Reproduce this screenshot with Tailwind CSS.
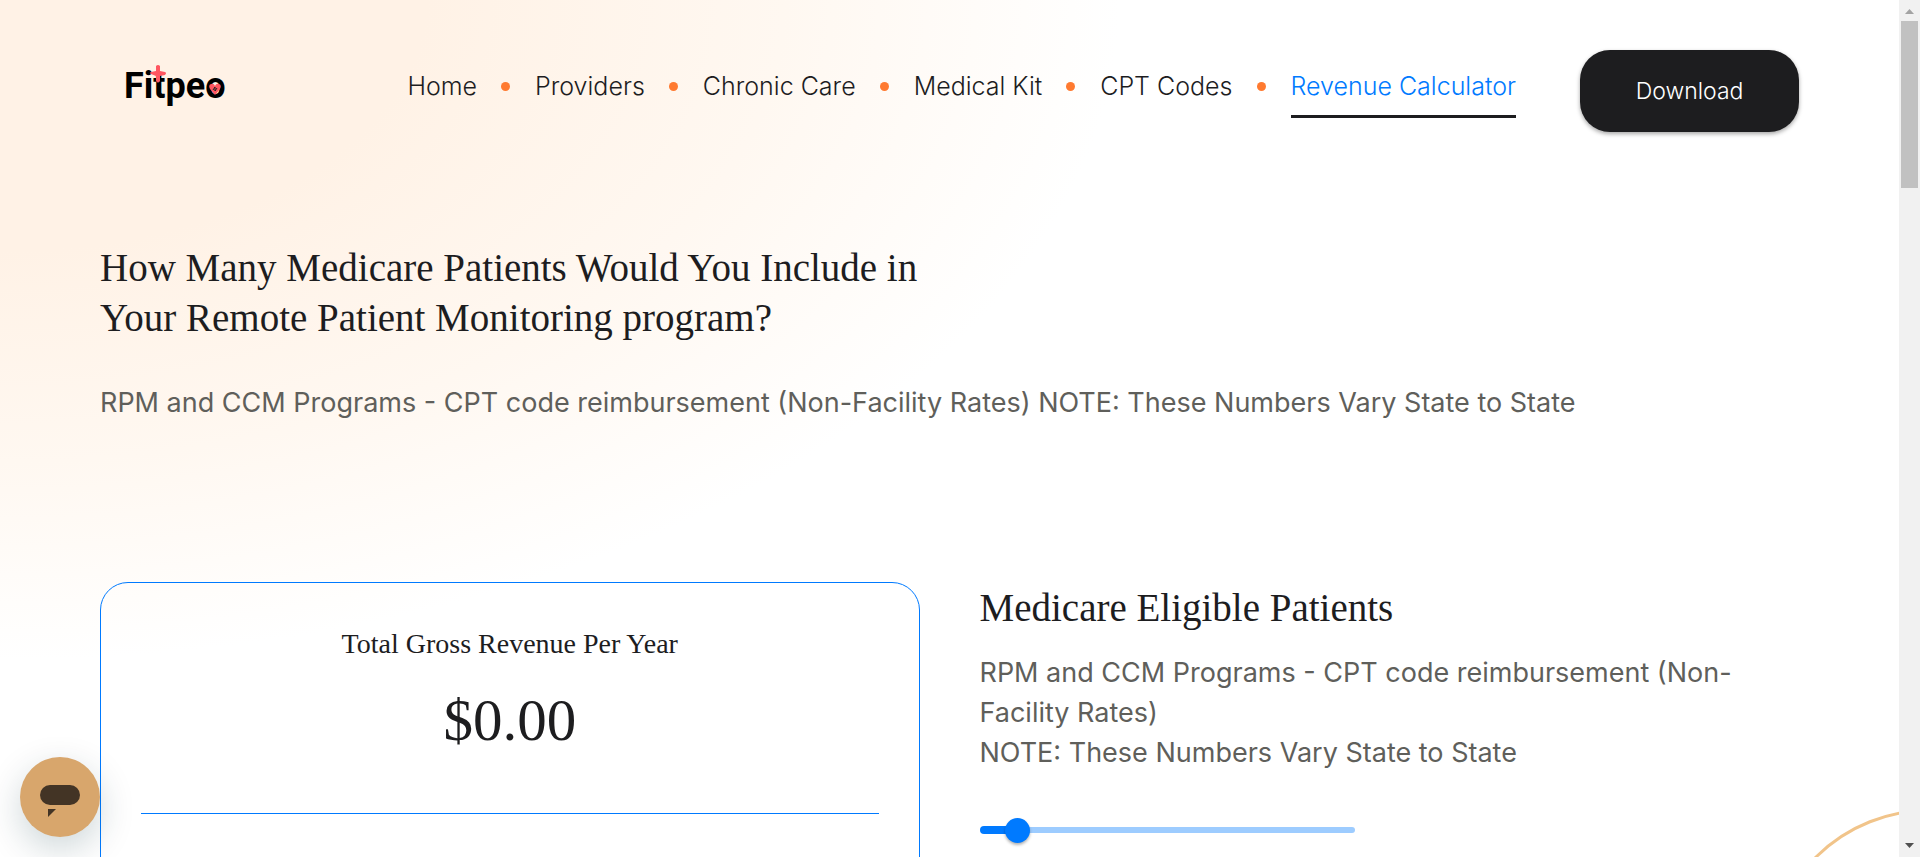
<!DOCTYPE html>
<html lang="en">
<head>
<meta charset="utf-8">
<meta name="viewport" content="width=device-width, initial-scale=1">
<title>Revenue Calculator</title>
<script src="https://cdn.jsdelivr.net/npm/@tailwindcss/browser@4"></script>
</head>
<body class="flex h-screen overflow-hidden bg-white font-['Inter',sans-serif] text-[#1d1d1f]">
<div class="relative min-w-0 flex-1 overflow-hidden bg-[radial-gradient(1120px_660px_at_0_0,#fff2e6_0%,#fff2e6_38%,#fff8f1_70%,#ffffff_100%)] px-[100px]">
  <header class="flex items-start justify-between pt-[50px]">
    <a href="#" class="relative mt-3 ml-6 block h-12 font-['Roboto',sans-serif] text-[36px] leading-12 font-bold text-black" aria-label="Fitpeo">Fitpeo
      <svg class="absolute top-[3px] left-[26px] h-[18px] w-[16px]" viewBox="0 0 16 18" fill="#ff5660" aria-hidden="true"><path d="M6 1q2-2 4 0l0 5 5 1q2 1 0 3l-5 1-0 5q-2 3-4 0l0-5-5-2q-2-1 0-2l5-1z"/></svg>
      <svg class="absolute top-[21px] left-[85px] h-3 w-3" viewBox="0 0 12 12" aria-hidden="true"><path fill="#ff5660" d="M6 12L1 6Q-1 2 2 1t4 2q1-3 4-2t1 5z"/><path fill="none" stroke="#222" d="M4 7l2-3v4l2-3"/></svg>
    </a>
    <nav class="mr-16 ml-auto text-[25px] leading-9 font-light" aria-label="Main">
      <ul class="flex items-start gap-[25px] pt-[18px]">
        <li class="flex items-center gap-6"><a href="#">Home</a><span class="size-[9px] rounded-full bg-[#ff7a30]"></span></li>
        <li class="flex items-center gap-6"><a href="#">Providers</a><span class="size-[9px] rounded-full bg-[#ff7a30]"></span></li>
        <li class="flex items-center gap-6"><a href="#">Chronic Care</a><span class="size-[9px] rounded-full bg-[#ff7a30]"></span></li>
        <li class="flex items-center gap-6"><a href="#">Medical Kit</a><span class="size-[9px] rounded-full bg-[#ff7a30]"></span></li>
        <li class="flex items-center gap-6"><a href="#">CPT Codes</a><span class="size-[9px] rounded-full bg-[#ff7a30]"></span></li>
        <li><a href="#" aria-current="page" class="block border-b-3 border-[#1d1d1f] pb-[11px] text-[#007aff]">Revenue Calculator</a></li>
      </ul>
    </nav>
    <button class="h-[82px] w-[219px] rounded-[30px] bg-[#1d1d1f] text-[23px] font-light text-white shadow-[0_2px_4px_rgba(0,0,0,0.35)]">Download</button>
  </header>

  <section class="mt-[111px]">
    <h1 class="font-['Liberation_Serif',serif] text-[39px] leading-[50px]">How Many Medicare Patients Would You Include in<br>Your Remote Patient Monitoring program?</h1>
    <p class="mt-10 text-[27px] leading-10 text-[#5f5f5b]">RPM and CCM Programs - CPT code reimbursement (Non-Facility Rates) NOTE: These Numbers Vary State to State</p>
  </section>

  <section class="mt-[159px] grid grid-cols-2 gap-[60px]">
    <div class="h-[600px] rounded-[28px] border border-[#007aff] px-10 pt-[41px] text-center font-['Liberation_Serif',serif]">
      <h2 class="text-[28px] leading-10">Total Gross Revenue Per Year</h2>
      <p class="mt-4 text-[59px] leading-[80px]">$0.00</p>
      <hr class="mt-[53px] border-[#007aff]">
    </div>
    <div class="pt-px pr-10">
      <h2 class="font-['Liberation_Serif',serif] text-[39px] leading-[50px]">Medicare Eligible Patients</h2>
      <p class="mt-5 text-[27px] leading-10 text-[#5f5f5b]">RPM and CCM Programs - CPT code reimbursement (Non-Facility Rates)<br>NOTE: These Numbers Vary State to State</p>
      <div class="mt-[45px] grid w-[375px] items-center">
        <div class="col-start-1 row-start-1 flex h-2 items-center"><div class="h-2 w-1/10 rounded-full bg-[#007aff]"></div><div class="h-[6px] flex-1 rounded-r-full bg-[#9dccff]"></div></div>
        <input type="range" min="0" max="2000" value="200" aria-label="Medicare eligible patients" class="relative col-start-1 row-start-1 -mx-3 h-6 appearance-none bg-transparent [&::-webkit-slider-thumb]:size-[25px] [&::-webkit-slider-thumb]:appearance-none [&::-webkit-slider-thumb]:rounded-full [&::-webkit-slider-thumb]:bg-[#007aff] [&::-webkit-slider-thumb]:shadow-[0_2px_3px_rgba(0,0,0,0.3)]">
      </div>
    </div>
  </section>

  <!-- Decorative ring, cut off by the right edge of the page -->
  <div class="absolute top-[809px] -right-48 size-[324px] rounded-full border-3 border-[#f1c48a]"></div>

  <button class="absolute bottom-5 left-5 flex size-20 items-center justify-center rounded-full bg-[#d8a66c] pt-2 shadow-[0_12px_36px_rgba(6,50,60,0.2)]" aria-label="Open chat">
    <svg class="h-8 w-10" viewBox="0 0 40 32" fill="#433425" aria-hidden="true"><rect width="40" height="20" rx="10"/><path d="M8 24h8l-8 8z"/></svg>
  </button>
</div>
<div class="flex w-[21px] flex-col items-center justify-between bg-[#f1f1f1]" aria-hidden="true">
  <div class="flex w-full flex-col items-center">
    <svg class="h-[21px] w-[9px]" viewBox="0 0 9 21" fill="#a3a3a3"><path d="M0 14L4.5 9 9 14z"/></svg>
    <div class="h-[167px] w-[17px] bg-[#c1c1c1]"></div>
  </div>
  <svg class="h-[21px] w-[9px]" viewBox="0 0 9 21" fill="#505050"><path d="M0 7h9L4.500 12z"/></svg>
</div>
</body>
</html>
